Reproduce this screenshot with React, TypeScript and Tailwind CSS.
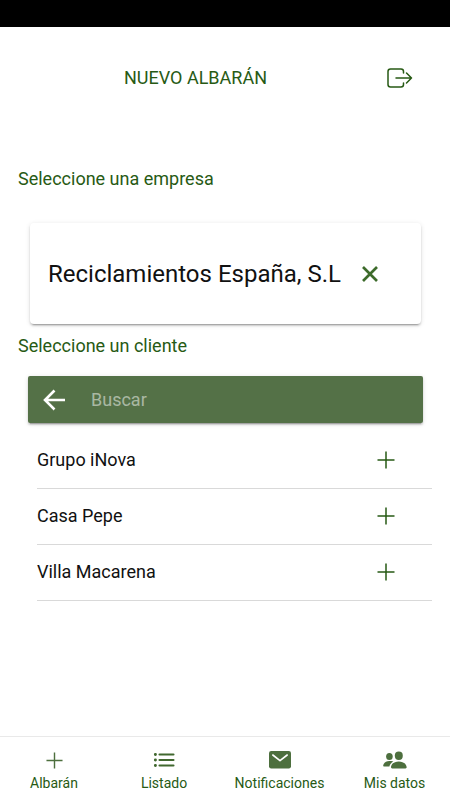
import { useState } from "react";

const clients = ["Grupo iNova", "Casa Pepe", "Villa Macarena"];

function PlusIcon({ className }: { className: string }) {
  return (
    <svg viewBox="0 0 18 18" className={className} stroke="currentColor" strokeWidth="1.5" aria-hidden="true">
      <path d="M9 0.5V17.5M0.5 9H17.5" />
    </svg>
  );
}

function ExitIcon() {
  return (
    <svg viewBox="0 0 26 20" className="h-5 w-[26px]" fill="none" stroke="currentColor" strokeWidth="1.5" strokeLinecap="round" strokeLinejoin="round" aria-hidden="true">
      <path d="M16.5 5V3.5Q16.5 1 14 1H3.5Q1 1 1 3.5V16.5Q1 19 3.5 19H14Q16.5 19 16.5 16.5V15" />
      <path d="M9 10H24.5M19.5 5L24.5 10L19.5 15" />
    </svg>
  );
}

function ListIcon() {
  return (
    <svg viewBox="0 0 22 16" className="h-4 w-[22px] text-[#41682f]" fill="none" stroke="currentColor" strokeWidth="2.1" strokeLinecap="round" aria-hidden="true">
      <path d="M6.5 2.5H20.5M6.5 8H20.5M6.5 13.5H20.5" />
      <path d="M2.3 2.5H2.5M2.3 8H2.5M2.3 13.5H2.5" strokeWidth="2.8" />
    </svg>
  );
}

function MailIcon() {
  return (
    <svg viewBox="0 0 22 18" className="h-[18px] w-[22px]" fill="none" aria-hidden="true">
      <rect width="22" height="17.5" rx="2.2" fill="currentColor" />
      <path d="M3.8 4L11 9.6L18.2 4" stroke="white" strokeWidth="1.6" strokeLinecap="round" strokeLinejoin="round" />
    </svg>
  );
}

function PeopleIcon() {
  return (
    <svg viewBox="0 0 24 18" className="h-[18px] w-6" fill="currentColor" aria-hidden="true">
      <ellipse cx="15.8" cy="4.7" rx="4" ry="4.2" />
      <path d="M15.8 10.4C12 10.4 8.5 12.2 8 15.8C7.9 16.9 8.4 17.4 9.2 17.4H22.5C23.4 17.4 23.8 16.8 23.6 15.8C23 12.2 19.5 10.4 15.8 10.4Z" />
      <ellipse cx="6.4" cy="5.5" rx="3.3" ry="3.5" />
      <path d="M10.4 10.6C9.1 10.2 7.7 10.1 6.4 10.1C3.3 10.1 0.6 11.6 0.2 14.6C0.1 15.4 0.5 15.6 1.2 15.6H6.4C6.8 13.6 8.1 11.9 10.4 10.6Z" />
    </svg>
  );
}

const tabs = [
  { label: "Albarán", icon: <PlusIcon className="size-[17px]" /> },
  { label: "Listado", icon: <ListIcon /> },
  { label: "Notificaciones", icon: <MailIcon /> },
  { label: "Mis datos", icon: <PeopleIcon /> },
];

export default function App() {
  const [query, setQuery] = useState("");
  return (
    <div className="flex min-h-screen flex-col bg-white font-['Roboto',sans-serif] text-[#275a14]">
      <div className="h-[27px] bg-black" />
      <header className="grid h-[102px] grid-cols-[1fr_auto_1fr] items-center px-[37px]">
        <h1 className="col-start-2 -ml-[59px] text-lg">NUEVO ALBARÁN</h1>
        <button type="button" aria-label="Salir" className="justify-self-end">
          <ExitIcon />
        </button>
      </header>

      <main className="flex-1">
        <h2 className="mt-9 px-[18px] text-lg">Seleccione una empresa</h2>
        <section className="mt-[30px] mr-[29px] ml-[30px] flex h-[101px] items-center rounded bg-white pr-[42px] pl-[18px] text-[#111] shadow-[0_3px_1px_-2px_rgba(0,0,0,0.2),0_2px_2px_0_rgba(0,0,0,0.14),0_1px_5px_0_rgba(0,0,0,0.12)]">
          <p className="flex-1 text-2xl whitespace-nowrap">Reciclamientos España, S.L</p>
          <button type="button" aria-label="Quitar empresa" className="text-[#3d6b2b]">
            <svg viewBox="0 0 18 18" className="size-[18px]" stroke="currentColor" strokeWidth="2.7" aria-hidden="true">
              <path d="M2 2L16 16M16 2L2 16" />
            </svg>
          </button>
        </section>

        <h2 className="mt-2 px-[18px] text-lg">Seleccione un cliente</h2>
        <div className="mt-4 mr-[27px] ml-[28px] flex h-[47px] items-center rounded-xs bg-[#547147] pl-[15px] text-white shadow-[0_3px_1px_-2px_rgba(0,0,0,0.2),0_2px_2px_0_rgba(0,0,0,0.14),0_1px_5px_0_rgba(0,0,0,0.12)]">
          <button type="button" aria-label="Volver">
            <svg viewBox="0 0 22 22" className="size-[22px]" fill="none" stroke="currentColor" strokeWidth="2.6" aria-hidden="true">
              <path d="M22 11H2.5M11.5 1.5L2 11L11.5 20.5" />
            </svg>
          </button>
          <input
            type="text"
            aria-label="Buscar"
            placeholder="Buscar"
            value={query}
            onChange={(e) => setQuery(e.target.value)}
            className="ml-[26px] min-w-0 flex-1 bg-transparent text-lg outline-none placeholder:text-white/50"
          />
        </div>

        <ul className="mt-[10px] mr-[18px] ml-[37px] text-[#111]">
          {clients.map((name) => (
            <li key={name} className="flex h-14 items-center justify-between border-b border-[#d9d9d9] pr-[37px] pb-px">
              <span className="text-lg">{name}</span>
              <button type="button" aria-label={"Añadir " + name} className="text-[#275a14]">
                <PlusIcon className="size-[18px]" />
              </button>
            </li>
          ))}
        </ul>
      </main>

      <nav className="grid h-16 grid-cols-[108fr_112fr_119fr_111fr] border-t border-[#e9e9e9]">
        {tabs.map((tab) => (
          <button key={tab.label} type="button" className="flex flex-col items-center gap-px pt-[11px]">
            <span className="flex h-6 items-center text-[#4d6f3e]">{tab.icon}</span>
            <span className="text-sm">{tab.label}</span>
          </button>
        ))}
      </nav>
    </div>
  );
}
